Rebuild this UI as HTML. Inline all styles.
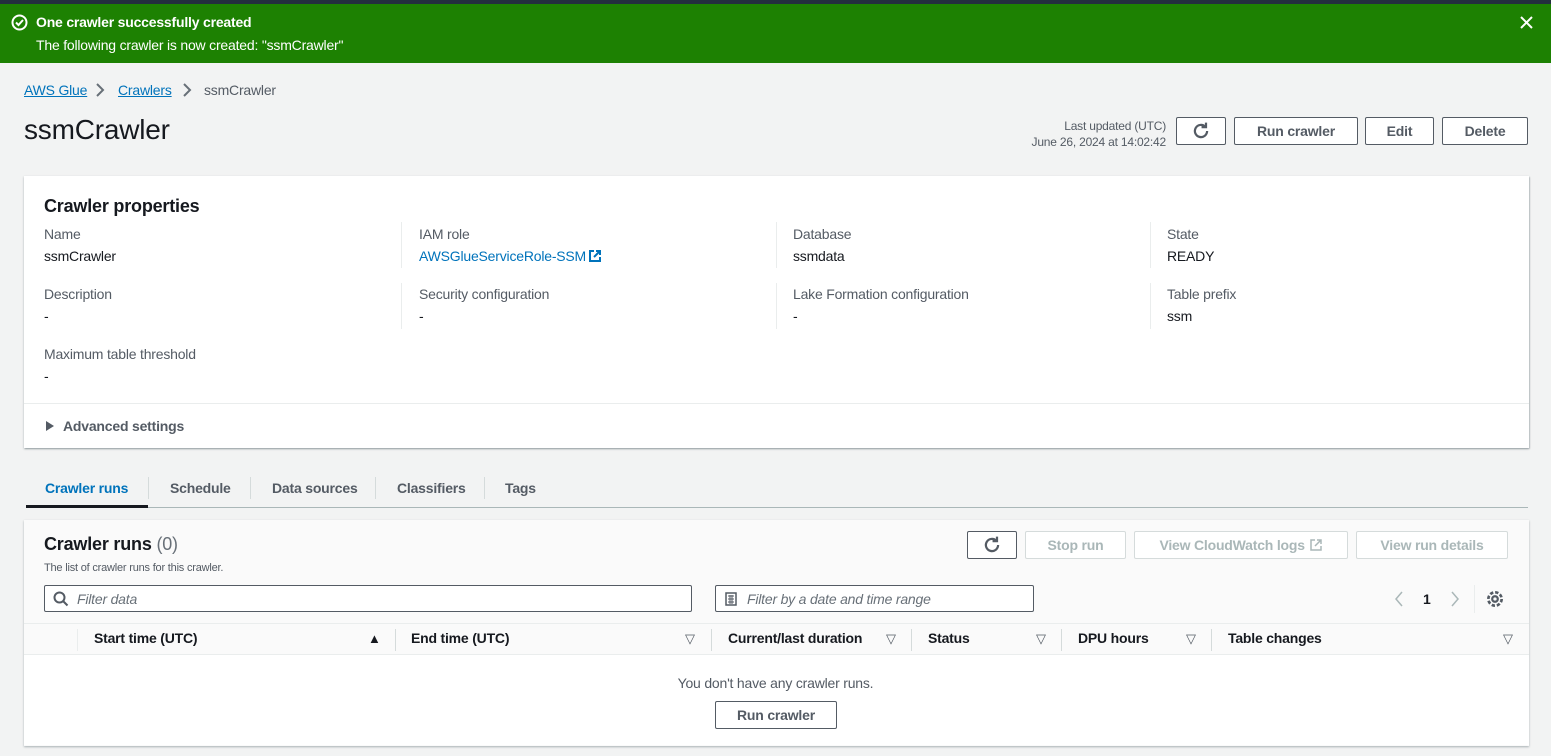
<!DOCTYPE html>
<html><head><meta charset="utf-8"><style>
*{box-sizing:border-box;margin:0;padding:0}
body{width:1551px;height:756px;overflow:hidden;background:#f2f3f3;font-family:"Liberation Sans",sans-serif;font-size:14px;color:#16191f;position:relative;letter-spacing:-0.2px}
.a{position:absolute;white-space:nowrap}
.btn{position:absolute;border:1px solid #545b64;background:#fff;border-radius:2px;font-weight:bold;color:#545b64;font-size:14px;display:flex;align-items:center;justify-content:center}
.dis{border-color:#d5dbdb;color:#aab7b8;background:#fff}
.lbl{color:#545b64}
.sep{position:absolute;width:1px;background:#eaeded}
.th{position:absolute;top:630px;font-weight:bold;color:#16191f}
.tri{position:absolute;top:631px;font-size:13px;color:#545b64}
.vs{position:absolute;top:629px;height:22px;width:1px;background:#d5dbdb}
</style></head><body>
<div class="a" style="left:0;top:0;width:1551px;height:4px;background:#232f3e"></div>
<div class="a" style="left:0;top:4px;width:1551px;height:59px;background:#1d8102"></div>
<svg class="a" style="left:11px;top:14px" width="17" height="17" viewBox="0 0 17 17"><circle cx="8.5" cy="8.5" r="7" fill="none" stroke="#fff" stroke-width="2"/><path d="M5 8.5l2.5 2.5 4.5-5" fill="none" stroke="#fff" stroke-width="2"/></svg>
<div class="a" style="left:36px;top:14px;color:#fff;font-weight:bold">One crawler successfully created</div>
<div class="a" style="left:36px;top:37px;color:#fff">The following crawler is now created: "ssmCrawler"</div>
<svg class="a" style="left:1519px;top:15px" width="15" height="15"><path d="M2 2l11 11M13 2L2 13" stroke="#fff" stroke-width="2"/></svg>

<div class="a" style="left:24px;top:82px;color:#0073bb;text-decoration:underline">AWS Glue</div>
<svg class="a" style="left:95px;top:83px" width="10" height="14"><path d="M2 1l6 6-6 6" fill="none" stroke="#687078" stroke-width="2"/></svg>
<div class="a" style="left:118px;top:82px;color:#0073bb;text-decoration:underline">Crawlers</div>
<svg class="a" style="left:182px;top:83px" width="10" height="14"><path d="M2 1l6 6-6 6" fill="none" stroke="#687078" stroke-width="2"/></svg>
<div class="a" style="left:204px;top:82px;color:#545b64">ssmCrawler</div>
<div class="a" style="left:24px;top:114px;font-size:28px">ssmCrawler</div>

<div class="a" style="left:1000px;top:118px;width:166px;text-align:right;font-size:12px;color:#545b64;line-height:16px">Last updated (UTC)<br>June 26, 2024 at 14:02:42</div>
<div class="btn" style="left:1176px;top:117px;width:50px;height:28px"><svg width="20" height="20" viewBox="0 0 18 18"><path d="M14.5 9a5.5 5.5 0 1 1-1.6-3.9" fill="none" stroke="#545b64" stroke-width="2"/><path d="M13.5 1.5v4h-4" fill="none" stroke="#545b64" stroke-width="2"/></svg></div>
<div class="btn" style="left:1234px;top:117px;width:124px;height:28px">Run crawler</div>
<div class="btn" style="left:1365px;top:117px;width:69px;height:28px">Edit</div>
<div class="btn" style="left:1442px;top:117px;width:86px;height:28px">Delete</div>

<div class="a" style="left:24px;top:176px;width:1505px;height:272px;background:#fff;box-shadow:0 1px 2px rgba(0,28,36,.3),1px 1px 1px rgba(0,28,36,.15)"></div>
<div class="a" style="left:44px;top:196px;font-size:18px;font-weight:bold">Crawler properties</div>
<div class="sep" style="left:401px;top:222px;height:46px"></div><div class="sep" style="left:776px;top:222px;height:46px"></div><div class="sep" style="left:1150px;top:222px;height:46px"></div>
<div class="sep" style="left:401px;top:283px;height:46px"></div><div class="sep" style="left:776px;top:283px;height:46px"></div><div class="sep" style="left:1150px;top:283px;height:46px"></div>
<div class="a lbl" style="left:44px;top:226px">Name</div><div class="a" style="left:44px;top:248px">ssmCrawler</div>
<div class="a lbl" style="left:419px;top:226px">IAM role</div><div class="a" style="left:419px;top:248px;color:#0073bb">AWSGlueServiceRole-SSM</div>
<svg class="a" style="left:588px;top:249px" width="14" height="14"><path d="M6 2H2v10h10V8M8 2h4v4M12 2L6 8" fill="none" stroke="#0073bb" stroke-width="2"/></svg>
<div class="a lbl" style="left:793px;top:226px">Database</div><div class="a" style="left:793px;top:248px">ssmdata</div>
<div class="a lbl" style="left:1167px;top:226px">State</div><div class="a" style="left:1167px;top:248px">READY</div>
<div class="a lbl" style="left:44px;top:286px">Description</div><div class="a" style="left:44px;top:308px">-</div>
<div class="a lbl" style="left:419px;top:286px">Security configuration</div><div class="a" style="left:419px;top:308px">-</div>
<div class="a lbl" style="left:793px;top:286px">Lake Formation configuration</div><div class="a" style="left:793px;top:308px">-</div>
<div class="a lbl" style="left:1167px;top:286px">Table prefix</div><div class="a" style="left:1167px;top:308px">ssm</div>
<div class="a lbl" style="left:44px;top:346px">Maximum table threshold</div><div class="a" style="left:44px;top:368px">-</div>
<div class="a" style="left:24px;top:403px;width:1505px;height:1px;background:#eaeded"></div>
<svg class="a" style="left:45px;top:420px" width="10" height="12"><path d="M1 1l8 5-8 5z" fill="#545b64"/></svg>
<div class="a" style="left:63px;top:418px;font-weight:bold;color:#545b64">Advanced settings</div>

<div class="a" style="left:26px;top:507px;width:1502px;height:1px;background:#aab7b8"></div>
<div class="a" style="left:26px;top:505px;width:122px;height:3px;background:#16191f"></div>
<div class="a" style="left:45px;top:480px;font-weight:bold;color:#0073bb">Crawler runs</div>
<div class="a" style="left:148px;top:477px;width:1px;height:22px;background:#d5dbdb"></div>
<div class="a" style="left:170px;top:480px;font-weight:bold;color:#545b64">Schedule</div>
<div class="a" style="left:250px;top:477px;width:1px;height:22px;background:#d5dbdb"></div>
<div class="a" style="left:272px;top:480px;font-weight:bold;color:#545b64">Data sources</div>
<div class="a" style="left:375px;top:477px;width:1px;height:22px;background:#d5dbdb"></div>
<div class="a" style="left:397px;top:480px;font-weight:bold;color:#545b64">Classifiers</div>
<div class="a" style="left:484px;top:477px;width:1px;height:22px;background:#d5dbdb"></div>
<div class="a" style="left:505px;top:480px;font-weight:bold;color:#545b64">Tags</div>

<div class="a" style="left:24px;top:520px;width:1505px;height:226px;background:#fafafa;box-shadow:0 1px 2px rgba(0,28,36,.3)"></div>
<div class="a" style="left:24px;top:655px;width:1505px;height:90px;background:#fff"></div>
<div class="a" style="left:44px;top:534px;font-size:18px;font-weight:bold">Crawler runs <span style="font-weight:normal;color:#687078">(0)</span></div>
<div class="a" style="left:44px;top:562px;font-size:11px;color:#545b64">The list of crawler runs for this crawler.</div>
<div class="btn" style="left:967px;top:531px;width:50px;height:28px"><svg width="20" height="20" viewBox="0 0 18 18"><path d="M14.5 9a5.5 5.5 0 1 1-1.6-3.9" fill="none" stroke="#545b64" stroke-width="2"/><path d="M13.5 1.5v4h-4" fill="none" stroke="#545b64" stroke-width="2"/></svg></div>
<div class="btn dis" style="left:1025px;top:531px;width:101px;height:28px">Stop run</div>
<div class="btn dis" style="left:1134px;top:531px;width:214px;height:28px">View CloudWatch logs&nbsp;<svg width="14" height="14"><path d="M6 2H2v10h10V8M8 2h4v4M12 2L6 8" fill="none" stroke="#aab7b8" stroke-width="1.5"/></svg></div>
<div class="btn dis" style="left:1356px;top:531px;width:152px;height:28px">View run details</div>

<div class="a" style="left:44px;top:585px;width:648px;height:27px;border:1px solid #545b64;border-radius:2px;background:#fff"></div>
<svg class="a" style="left:53px;top:591px" width="16" height="16"><circle cx="6.5" cy="6.5" r="5" fill="none" stroke="#545b64" stroke-width="2"/><path d="M10 10l4.5 4.5" stroke="#545b64" stroke-width="2"/></svg>
<div class="a" style="left:77px;top:591px;font-style:italic;color:#687078">Filter data</div>
<div class="a" style="left:715px;top:585px;width:319px;height:27px;border:1px solid #545b64;border-radius:2px;background:#fff"></div>
<svg class="a" style="left:725px;top:592px" width="12" height="14"><rect x="1" y="1" width="10" height="12" fill="none" stroke="#545b64" stroke-width="1.5"/><path d="M3 4h6M3 7h6M3 10h6M5 3v9M7 3v9" stroke="#545b64" stroke-width="1"/></svg>
<div class="a" style="left:747px;top:591px;font-style:italic;color:#687078">Filter by a date and time range</div>
<svg class="a" style="left:1393px;top:591px" width="12" height="16"><path d="M9 1L3 8l6 7" fill="none" stroke="#aab7b8" stroke-width="1.5"/></svg>
<div class="a" style="left:1423px;top:591px;font-weight:bold">1</div>
<svg class="a" style="left:1449px;top:591px" width="12" height="16"><path d="M3 1l6 7-6 7" fill="none" stroke="#aab7b8" stroke-width="1.5"/></svg>
<div class="a" style="left:1474px;top:585px;width:1px;height:28px;background:#eaeded"></div>
<svg class="a" style="left:1485px;top:589px" width="20" height="20" viewBox="0 0 18 18"><circle cx="9" cy="9" r="2.5" fill="none" stroke="#545b64" stroke-width="2"/><circle cx="9" cy="9" r="6" fill="none" stroke="#545b64" stroke-width="2.4" stroke-dasharray="3 1.7"/></svg>

<div class="a" style="left:24px;top:623px;width:1505px;height:1px;background:#eaeded"></div>
<div class="a" style="left:24px;top:654px;width:1505px;height:1px;background:#eaeded"></div>
<div class="vs" style="left:77px;background:#eaeded"></div>
<div class="th" style="left:94px">Start time (UTC)</div><div class="a" style="left:368px;top:631px;font-size:13px;color:#16191f">&#9650;</div>
<div class="vs" style="left:395px"></div>
<div class="th" style="left:411px">End time (UTC)</div><div class="tri" style="left:685px">&#9661;</div>
<div class="vs" style="left:711px"></div>
<div class="th" style="left:728px">Current/last duration</div><div class="tri" style="left:886px">&#9661;</div>
<div class="vs" style="left:911px"></div>
<div class="th" style="left:928px">Status</div><div class="tri" style="left:1036px">&#9661;</div>
<div class="vs" style="left:1061px"></div>
<div class="th" style="left:1078px">DPU hours</div><div class="tri" style="left:1186px">&#9661;</div>
<div class="vs" style="left:1211px"></div>
<div class="th" style="left:1228px">Table changes</div><div class="tri" style="left:1503px">&#9661;</div>

<div class="a" style="left:0;top:675px;width:1551px;text-align:center;color:#545b64">You don't have any crawler runs.</div>
<div class="btn" style="left:715px;top:701px;width:122px;height:28px;color:#545b64">Run crawler</div>
</body></html>
